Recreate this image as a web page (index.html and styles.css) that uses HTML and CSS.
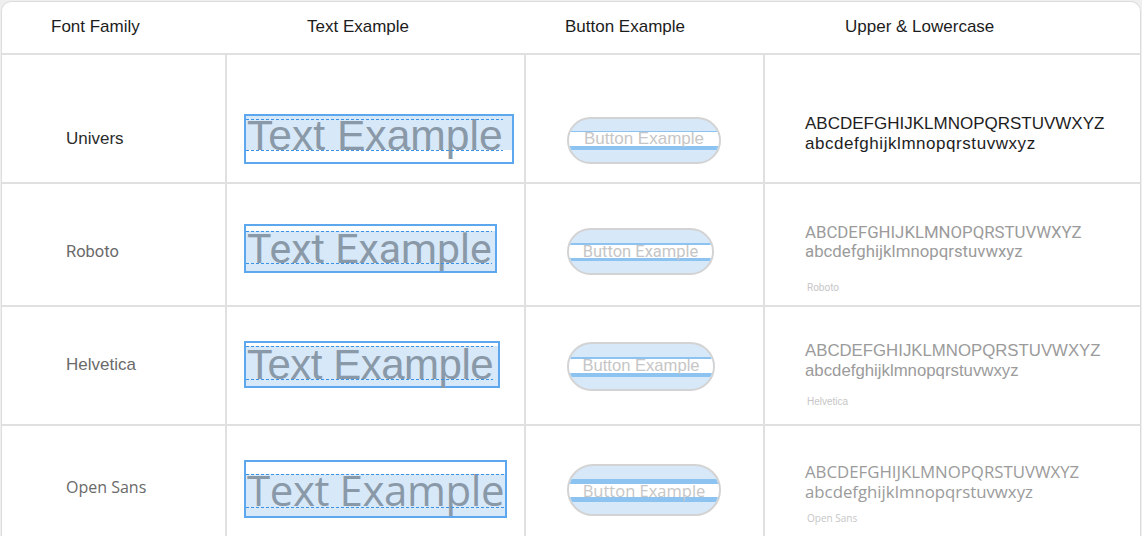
FILE: index.html
```html
<!DOCTYPE html>
<html>
<head>
<meta charset="utf-8">
<link rel="stylesheet" href="styles.css">
</head>
<body>
<div class="card">
  <div class="row head">
    <div class="cell c1">Font Family</div>
    <div class="cell c2">Text Example</div>
    <div class="cell c3">Button Example</div>
    <div class="cell c4">Upper &amp; Lowercase</div>
  </div>

  <div class="row r1 f-univers">
    <div class="cell c1"><span class="name">Univers</span></div>
    <div class="cell c2">
      <div class="tbox"><span class="ttext">Text Example<i class="cap"></i><i class="base"></i></span></div>
    </div>
    <div class="cell c3">
      <div class="pill"><div class="band"><span>Button Example</span></div></div>
    </div>
    <div class="cell c4">
      <div class="alpha">ABCDEFGHIJKLMNOPQRSTUVWXYZ</div>
      <div class="alpha lower">abcdefghijklmnopqrstuvwxyz</div>
    </div>
  </div>

  <div class="row r2 f-roboto">
    <div class="cell c1"><span class="name">Roboto</span></div>
    <div class="cell c2">
      <div class="tbox"><span class="ttext">Text Example<i class="cap"></i><i class="base"></i></span></div>
    </div>
    <div class="cell c3">
      <div class="pill"><div class="band"><span>Button Example</span></div></div>
    </div>
    <div class="cell c4">
      <div class="alpha">ABCDEFGHIJKLMNOPQRSTUVWXYZ</div>
      <div class="alpha lower">abcdefghijklmnopqrstuvwxyz</div>
      <div class="label">Roboto</div>
    </div>
  </div>

  <div class="row r3 f-helvetica">
    <div class="cell c1"><span class="name">Helvetica</span></div>
    <div class="cell c2">
      <div class="tbox"><span class="ttext">Text Example<i class="cap"></i><i class="base"></i></span></div>
    </div>
    <div class="cell c3">
      <div class="pill"><div class="band"><span>Button Example</span></div></div>
    </div>
    <div class="cell c4">
      <div class="alpha">ABCDEFGHIJKLMNOPQRSTUVWXYZ</div>
      <div class="alpha lower">abcdefghijklmnopqrstuvwxyz</div>
      <div class="label">Helvetica</div>
    </div>
  </div>

  <div class="row r4 f-opensans">
    <div class="cell c1"><span class="name">Open Sans</span></div>
    <div class="cell c2">
      <div class="tbox"><span class="ttext">Text Example<i class="cap"></i><i class="base"></i></span></div>
    </div>
    <div class="cell c3">
      <div class="pill"><div class="band"><span>Button Example</span></div></div>
    </div>
    <div class="cell c4">
      <div class="alpha">ABCDEFGHIJKLMNOPQRSTUVWXYZ</div>
      <div class="alpha lower">abcdefghijklmnopqrstuvwxyz</div>
      <div class="label">Open Sans</div>
    </div>
  </div>
</div>
</body>
</html>
```

FILE: styles.css
```css
html, body {
  margin: 0;
  padding: 0;
}
body {
  background: #efefef;
  font-family: "Liberation Sans", Arial, sans-serif;
  height: 536px;
  overflow: hidden;
}
.card {
  margin: 1px 1px 0 1px;
  background: #fff;
  border: 1px solid #dcdcdc;
  border-bottom: none;
  border-radius: 10px 10px 0 0;
  height: 600px;
  overflow: hidden;
}
.row {
  display: grid;
  grid-template-columns: 223px 299px 239px 1fr;
  border-bottom: 2px solid #e0e0e0;
  box-sizing: border-box;
}
.cell {
  box-sizing: border-box;
}

/* header */
.head { height: 53px; }
.head .cell {
  padding-top: 15px;
  font-size: 17px;
  line-height: 20px;
  color: #1c1c1c;
  white-space: nowrap;
}
.head .c1 { padding-left: 49px; }
.head .c2 { padding-left: 82px; }
.head .c3 { padding-left: 41px; }
.head .c4 { padding-left: 82px; }

/* body rows */
.r1 { height: 129px; }
.r2 { height: 123px; }
.r3 { height: 119px; }
.r4 { height: 122px; border-bottom: none; }

.row:not(.head) .c2,
.row:not(.head) .c3,
.row:not(.head) .c4 {
  border-left: 2px solid #e0e0e0;
}
.row:not(.head) .c1 { padding-left: 64px; }
.row:not(.head) .c2 { padding-left: 17px; }
.row:not(.head) .c3 { padding-left: 41px; }
.row:not(.head) .c4 { padding-left: 40px; }

.name {
  display: block;
  font-size: 17px;
  line-height: 20px;
  color: #6a6a6a;
}

/* text example box */
.tbox {
  position: relative;
  border: 2px solid #5ca7ee;
  isolation: isolate;
  white-space: nowrap;
}
.tbox::before {
  content: "";
  position: absolute;
  left: 0;
  right: 0;
  background: #d7e8f9;
  z-index: -1;
}
.ttext {
  position: relative;
  display: block;
  width: fit-content;
  color: #8a99a8;
  padding-left: 1px;
}
.cap, .base {
  position: absolute;
  left: 0;
  right: 0;
  height: 1px;
  background-image: linear-gradient(to right, #3b93e6 60%, transparent 60%);
  background-size: 5px 1px;
}

/* button example */
.pill {
  box-sizing: border-box;
  border: 2px solid #d3d3d3;
  border-radius: 30px;
  background: #d7e8f9;
  overflow: hidden;
  display: flex;
  align-items: center;
}
.band {
  width: 100%;
  background: #fff;
  border-top: 1px solid #8dc3f0;
  border-bottom: 4px solid #8dc3f0;
  text-align: center;
  color: #c6c6c6;
  white-space: nowrap;
}

/* alphabets */
.alpha {
  white-space: nowrap;
  color: #9b9b9b;
}
.label {
  font-size: 10px;
  line-height: 12px;
  color: #c6c6c6;
  padding-left: 2px;
}

/* ---- Univers row ---- */
.r1 .c1 { padding-top: 74px; }
.r1 .c2 { padding-top: 59px; }
.r1 .c3 { padding-top: 62px; }
.r1 .c4 { padding-top: 59px; }
.r1 .name { color: #2b2b2b; }
.r1 .tbox { width: 266px; }
.r1 .tbox::before { top: 0; height: 34px; }
.r1 .ttext {
  font-family: "Liberation Sans", Arial, sans-serif;
  font-size: 42.6px;
  line-height: 38px;
  padding-bottom: 8px;
}
.r1 .cap { top: 3px; }
.r1 .base { top: 34px; }
.r1 .pill { width: 154px; height: 47px; }
.r1 .band { border-top-width: 1px; border-bottom-width: 4px; }
.r1 .band span { display: block; font-size: 17px; line-height: 14px; }
.r1 .alpha {
  font-size: 17px;
  line-height: 20px;
  color: #1e1e1e;
}
.r1 .lower { letter-spacing: 0.55px; }

/* ---- Roboto row ---- */
.r2 .c1 { padding-top: 58px; }
.r2 .c2 { padding-top: 40px; }
.r2 .c3 { padding-top: 44px; }
.r2 .c4 { padding-top: 39px; }
.r2 .name { font-family: Roboto, sans-serif; font-size: 16.5px; }
.r2 .tbox { width: 249px; }
.r2 .tbox::before { top: 5px; bottom: 0; }
.r2 .ttext {
  font-family: Roboto, sans-serif;
  font-size: 41px;
  line-height: 44px;
  padding-top: 1px;
}
.r2 .cap { top: 5px; }
.r2 .base { top: 37px; }
.r2 .pill { width: 147px; height: 47px; }
.r2 .band { border-top-width: 2px; border-bottom-width: 3px; }
.r2 .band span { display: block; font-family: Roboto, sans-serif; font-size: 16.5px; line-height: 13px; }
.r2 .alpha {
  font-family: Roboto, sans-serif;
  font-size: 16.8px;
  line-height: 19px;
}
.r2 .label { font-family: Roboto, sans-serif; margin-top: 21px; }

/* ---- Helvetica row ---- */
.r3 .c1 { padding-top: 48px; }
.r3 .c2 { padding-top: 34px; }
.r3 .c3 { padding-top: 35px; }
.r3 .c4 { padding-top: 34px; }
.r3 .tbox { width: 252px; }
.r3 .tbox::before { top: 3px; bottom: 0; }
.r3 .ttext {
  font-size: 42px;
  line-height: 43px;
  letter-spacing: -0.5px;
}
.r3 .cap { top: 3px; }
.r3 .base { top: 36px; }
.r3 .pill { width: 148px; height: 49px; }
.r3 .band { border-top-width: 2px; border-bottom-width: 4px; }
.r3 .band span { display: block; font-size: 16.6px; line-height: 14px; }
.r3 .alpha {
  font-size: 16.8px;
  line-height: 20px;
}
.r3 .label { margin-top: 15px; }

/* ---- Open Sans row ---- */
.r4 .c1 { padding-top: 51px; }
.r4 .c2 { padding-top: 34px; }
.r4 .c3 { padding-top: 38px; }
.r4 .c4 { padding-top: 36px; }
.r4 .name { font-family: "Open Sans", sans-serif; font-size: 16px; }
.r4 .tbox { width: 259px; }
.r4 .tbox::before { top: 12px; bottom: 0; }
.r4 .ttext {
  font-family: "Open Sans", sans-serif;
  font-size: 42px;
  line-height: 52px;
  padding-top: 2px;
  letter-spacing: -0.4px;
}
.r4 .cap { top: 12px; }
.r4 .base { top: 45px; }
.r4 .pill { width: 154px; height: 52px; }
.r4 .band { border-top-width: 5px; border-bottom-width: 5px; }
.r4 .band span { display: block; font-family: "Open Sans", sans-serif; font-size: 16.5px; line-height: 13px; }
.r4 .alpha {
  font-family: "Open Sans", sans-serif;
  font-size: 16.8px;
  line-height: 20px;
}
.r4 .label { font-family: "Open Sans", sans-serif; margin-top: 10px; }
```
